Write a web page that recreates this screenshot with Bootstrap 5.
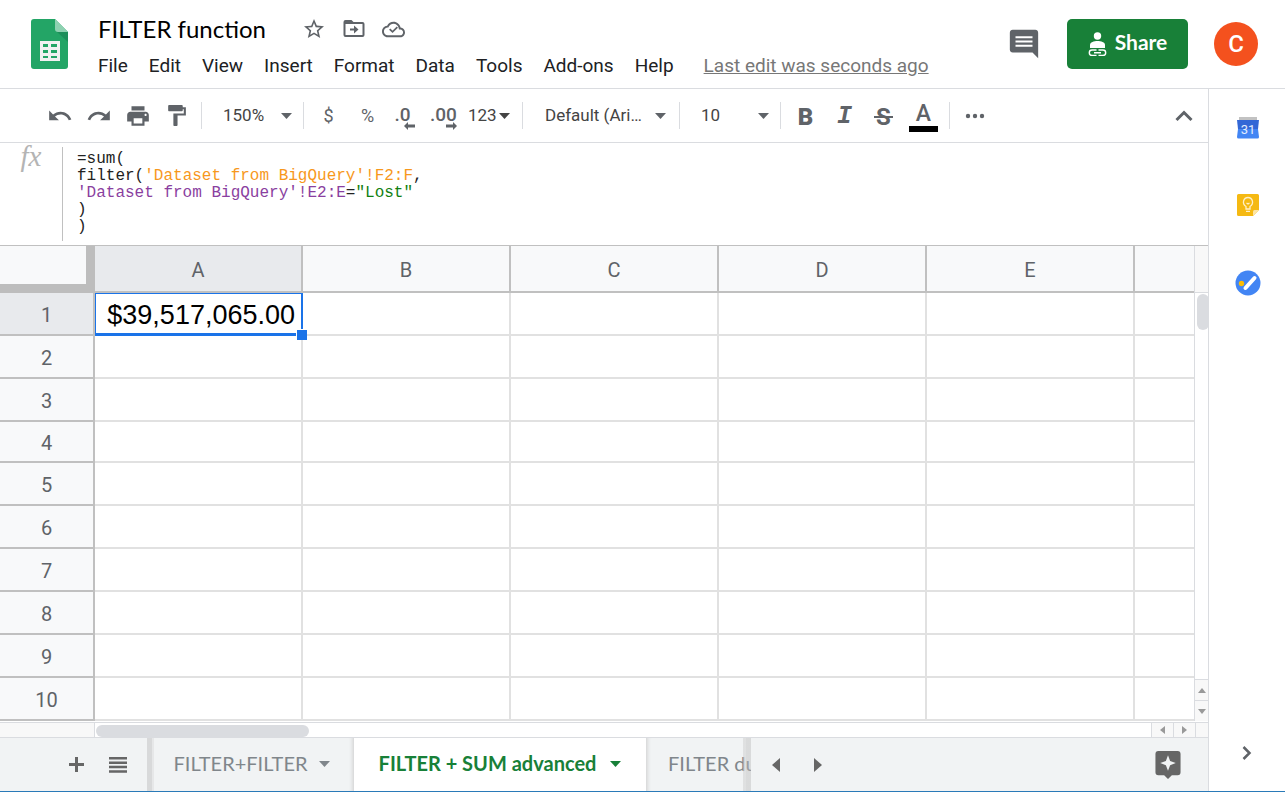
<!DOCTYPE html>
<html lang="en">
<head>
<meta charset="utf-8">
<meta name="viewport" content="width=device-width, initial-scale=1">
<title>FILTER function</title>
<link href="https://cdn.jsdelivr.net/npm/bootstrap@5.3.0/dist/css/bootstrap.min.css" rel="stylesheet">
<style>
  :root { --ink:#5f6368; --line:#dadce0; --head:#c0c0c0; --cell:#e1e1e1; --green:#188038; }
  body { font-family: Roboto, "Liberation Sans", sans-serif; color:#202124; background:#fff; }
  svg { display:block; fill:currentColor; flex:none; }
  button { color:inherit; }
  .plain { border:0; background:none; padding:0; display:flex; align-items:center; justify-content:center; flex:none; }
  .ink { color:var(--ink); }

  /* header */
  .topbar { height:89px; padding:0 27px 0 31px; border-bottom:1px solid var(--line); }
  .logo { margin-top:19px; }
  .doc { margin:13px 0 0 30px; }
  .doc-title { font:400 24px/32px Lato, sans-serif; color:#000; margin:0 36px 0 0; }
  .doc-icons { color:var(--ink); gap:17px; }
  .menus { gap:21px; font-size:19px; line-height:26px; padding-top:8px; }
  .menus a { color:#202124; text-decoration:none; white-space:nowrap; }
  .menus a.last-edit { color:#777; text-decoration:underline; margin-left:9px; }
  .actions { margin-top:19px; gap:26px; }
  .share { height:50px; width:121px; border-radius:5px; background:var(--green); color:#fff; font:700 21px/24px Lato, sans-serif; padding-bottom:4px; }
  .share svg { margin-top:5px; }
  .avatar { width:44px; height:44px; border-radius:50%; background:#f4511e; color:#fff; font-weight:500; font-size:24px; }

  /* toolbar */
  .toolbar { height:54px; padding:0 5px 0 40px; border-bottom:1px solid var(--line); color:var(--ink); font-size:18px; }
  .tool { width:39px; height:40px; }
  .rule { width:1px; height:27px; background:var(--line); margin:0 5px; flex:none; }
  .pick { appearance:none; border:0; color:#444; font-size:17px; height:40px; padding:0 16px; flex:none;
    background:no-repeat right 6px center / 11px 6px url("data:image/svg+xml,%3Csvg xmlns='http://www.w3.org/2000/svg' viewBox='0 0 11 6'%3E%3Cpath fill='%235f6368' d='M0 0h11L5.5 6z'/%3E%3C/svg%3E"); }
  .pick-zoom { width:91px; } .pick-font { width:146px; padding-left:17px; background-position:right 8px center; } .pick-size { width:90px; }
  .numfmt { width:52px; gap:2px; font-size:17px; color:#444; justify-content:start; padding-left:3px; }
  .decimals { position:relative; font-weight:500; font-size:19px; }
  .decimals svg { position:absolute; right:11px; bottom:6px; }
  .decimals.more svg { right:8px; }
  .bold-t { font-weight:900; font-size:24px; padding-top:3px; }
  .ital-t { font:italic 700 25px/24px "Liberation Mono", monospace; padding-top:3px; }
  .strike-t { font-weight:700; font-size:24px; position:relative; padding-top:2px; }
  .strike-t::after { content:""; position:absolute; left:10px; right:10px; top:20px; height:2px; background:currentColor; }
  .color-t { width:41px; flex-direction:column; font-weight:500; font-size:23px; line-height:24px; padding-top:2px; }
  .color-t i { width:29px; height:6px; background:#000; }

  /* formula bar */
  .formula { height:103px; border-bottom:1px solid var(--head); }
  .fx { width:62px; font:italic 29px/26px "Liberation Serif", serif; color:#b4b4b4; }
  .formula pre { margin:4px 0; padding:4px 14px; border-left:1px solid var(--head); font:16px/17px "Liberation Mono", monospace; color:#222; overflow:hidden; flex:1; }
  .ref-a { color:#f7981d; } .ref-b { color:#8a3fa0; } .str { color:#118011; }

  /* sheet */
  .sheet { table-layout:fixed; border-collapse:separate; border-spacing:0; width:100%; }
  .sheet .c-head { width:95px; } .sheet .c-data { width:208px; }
  .sheet th { background:#f8f9fa; color:var(--ink); font-weight:400; font-size:20px; text-align:center; padding:2px 0 0; border:solid var(--head); border-width:0 2px 2px 0; }
  .sheet td { padding:0 6px; border:solid var(--cell); border-width:0 2px 2px 0; text-align:right; }
  .sheet tr > :last-child { border-right:0; }
  .sheet thead tr { height:47px; }
  .sheet tbody tr { height:43px; }
  .sheet tbody tr.short { height:41px; }
  .sheet th.on { background:#e8eaed; }
  .sheet th.corner { border-width:0 9px 9px 0; border-color:#bdbdbd; }
  .sheet td.active { position:relative; font:27px/38px "Liberation Sans", sans-serif; color:#000; white-space:nowrap; padding-top:3px; }
  .active::before { content:""; position:absolute; inset:0 -2px -2px 0; border:solid #1a73e8; border-width:1px 2px 3px 1px; }
  .active::after { content:""; position:absolute; right:-6px; bottom:-6px; width:11px; height:11px; background:#1a73e8; border:solid #fff; border-width:1px 0 0 1px; z-index:1; }

  /* scroll lanes */
  .lane-y { width:14px; border-left:1px solid var(--line); flex:none; }
  .lane-y .cap { height:47px; background:#f8f8f8; border-bottom:1px solid var(--line); }
  .lane-y .thumb { width:12px; height:36px; border-radius:6px; background:#dadce0; margin:1px 0 0 2px; }
  .lane-y .step { height:21px; border-top:1px solid var(--line); background:#f8f8f8; width:100%; color:#999; }
  .lane-x { height:16px; border:solid var(--line); border-width:1px 0 1px 0; margin-top:1px; }
  .lane-x .cap { width:95px; background:#f8f8f8; border-right:1px solid var(--line); }
  .lane-x .thumb { width:213px; height:12px; border-radius:6px; background:#dadce0; margin:2px 0 0 1px; }
  .lane-x .step { border-left:1px solid var(--line); background:#f8f8f8; color:#999; width:22px; }
  .lane-x .end { width:13px; border-left:1px solid var(--line); background:#f8f8f8; }

  /* sheet tabs */
  .tabs { height:53px; background:#f1f3f4; color:#666; }
  .tab-tools { width:147px; padding-right:20px; gap:25px; }
  .tabs .edge { width:7px; background:linear-gradient(90deg,#d8d9da 0 5px,#e6e7e8 5px); flex:none; }
  .tab { font:400 20px/24px Lato, sans-serif; color:#80868b; gap:12px; white-space:nowrap; padding-bottom:4px; }
  .tab svg { margin-top:2px; }
  .tab-one { width:200px; padding-right:4px; box-shadow:inset -5px 0 4px -4px #ccc; }
  .tab-now { width:292px; gap:14px; background:#fff; color:var(--green); font-weight:700; }
  .tab-cut { width:105px; overflow:hidden; padding-left:22px; justify-content:start; position:relative; box-shadow:inset 5px 0 4px -4px #ccc; }
  .tab-cut::after { content:""; position:absolute; inset:0 0 0 auto; width:8px; background:linear-gradient(90deg,#cccc 0 3px,#bbbb 3px); opacity:.6; }
  .tab-steps { padding-left:21px; gap:34px; }
  .explore { margin-right:27px; }

  .side { width:77px; border-left:1px solid var(--line); padding:27px 0 31px; flex:none; }
  .side .apps { gap:52px; padding-left:1px; }
  .foot-rule { height:1px; background:#2a7ab8; }
</style>
</head>
<body class="d-flex flex-column min-vh-100">

<header class="topbar d-flex align-items-start">
  <svg class="logo" width="37" height="50" viewBox="0 0 37 50" aria-hidden="true">
    <path fill="#23a566" d="M3 0h21l13 13v34a3 3 0 0 1-3 3H3a3 3 0 0 1-3-3V3a3 3 0 0 1 3-3z"/>
    <path fill="#1c8f5a" d="M25 12l12 11V13z"/><path fill="#8ed1b1" d="M24 0l13 13H27a3 3 0 0 1-3-3z"/>
    <path fill="#f1f1f1" fill-rule="evenodd" d="M9 22h20v20H9zM12 25v3h5v-3zm8 0v3h6v-3zm-8 6v3h5v-3zm8 0v3h6v-3zm-8 6v2h5v-2zm8 0v2h6v-2z"/>
  </svg>
  <div class="doc flex-grow-1">
    <div class="d-flex align-items-center">
      <h1 class="doc-title">FILTER function</h1>
      <div class="doc-icons d-flex align-items-center">
        <button class="plain" aria-label="Star"><svg width="24" height="24" viewBox="0 0 24 24"><path d="M22 9.240l-7.190-.620L12 2 9.190 8.630 2 9.240l5.460 4.730L5.820 21 12 17.270 18.180 21l-1.630-7.030L22 9.240zM12 15.400l-3.760 2.270 1-4.280-3.320-2.880 4.380-.380L12 6.100l1.710 4.040 4.380.380-3.320 2.880 1 4.280L12 15.400z"/></svg></button>
        <button class="plain" aria-label="Move"><svg width="22" height="18" viewBox="0 0 22 18"><path fill-rule="evenodd" d="M2.500 0h6l2 2h9A2 2 0 0 1 21.500 4v11a2 2 0 0 1-2 2h-17a2 2 0 0 1-2-2V2a2 2 0 0 1 2-2zM2.500 4v11h17V4zM11 5.500l4.500 4-4.500 4v-3H7v-2h4z"/></svg></button>
        <button class="plain" aria-label="Saved to Drive"><svg width="23" height="23" viewBox="0 0 24 24"><path d="M19.350 10.040C18.670 6.590 15.640 4 12 4 9.110 4 6.610 5.640 5.360 8.040 2.350 8.360 0 10.910 0 14c0 3.310 2.690 6 6 6h13c2.760 0 5-2.240 5-5 0-2.640-2.050-4.780-4.650-4.960zM19 18H6c-2.210 0-4-1.790-4-4 0-2.050 1.530-3.760 3.560-3.970l1.070-.110.500-.950C8.080 7.140 9.940 6 12 6c2.620 0 4.880 1.860 5.390 4.430l.300 1.500 1.530.110c1.560.100 2.780 1.410 2.780 2.960 0 1.650-1.350 3-3 3z"/><path d="M8 11.500l3 3 5-5" fill="none" stroke="currentColor" stroke-width="1.800"/></svg></button>
      </div>
    </div>
    <nav class="menus d-flex" aria-label="Menus">
      <a href="#">File</a><a href="#">Edit</a><a href="#">View</a><a href="#">Insert</a><a href="#">Format</a><a href="#">Data</a><a href="#">Tools</a><a href="#">Add-ons</a><a href="#">Help</a>
      <a href="#" class="last-edit">Last edit was seconds ago</a>
    </nav>
  </div>
  <div class="actions d-flex align-items-center">
    <button class="plain ink" aria-label="Comments"><svg width="34" height="34" viewBox="0 0 24 24"><path d="M21.990 4c0-1.100-.890-2-1.990-2H4c-1.100 0-2 .900-2 2v12c0 1.100.900 2 2 2h14l4 4-.010-18zM18 14H6v-1.500h12V14zm0-3H6V9.500h12V11zm0-3H6V6.500h12V8z"/></svg></button>
    <button class="plain share gap-2">
      <svg width="19" height="25" viewBox="0 0 19 25"><circle cx="9.500" cy="4" r="3.700"/><path d="M2 16v-3c0-3 4-4 7.500-4s7.500 1 7.500 4v3z"/><path d="M8.500 18H4a2.700 2.700 0 0 0 0 5.400h4.500m2-5.400H15a2.700 2.700 0 0 1 0 5.400h-4.500M6 20.700h7" fill="none" stroke="#fff" stroke-width="1.400"/></svg>
      Share</button>
    <button class="plain avatar" aria-label="Account">C</button>
  </div>
</header>

<div class="d-flex flex-grow-1">
  <main class="flex-grow-1 d-flex flex-column overflow-hidden">
    <div class="toolbar d-flex align-items-center" role="toolbar" aria-label="Formatting">
      <button class="plain tool" aria-label="Undo"><svg width="26" height="26" viewBox="0 0 24 24"><path d="M12.500 8c-2.650 0-5.050.990-6.900 2.600L2 7v9h9l-3.620-3.620c1.390-1.160 3.160-1.880 5.120-1.880 3.540 0 6.550 2.310 7.600 5.500l2.370-.780C21.080 11.030 17.150 8 12.500 8z"/></svg></button>
      <button class="plain tool" aria-label="Redo"><svg width="26" height="26" viewBox="0 0 24 24"><path d="M18.400 10.600C16.550 8.990 14.150 8 11.500 8c-4.650 0-8.580 3.030-9.960 7.220L3.900 16c1.050-3.190 4.050-5.500 7.600-5.500 1.950 0 3.730.720 5.120 1.880L13 16h9V7l-3.600 3.600z"/></svg></button>
      <button class="plain tool" aria-label="Print"><svg width="26" height="26" viewBox="0 0 24 24"><path d="M19 8H5c-1.660 0-3 1.340-3 3v6h4v4h12v-4h4v-6c0-1.660-1.340-3-3-3zm-3 11H8v-5h8v5zm3-7c-.550 0-1-.450-1-1s.450-1 1-1 1 .450 1 1-.450 1-1 1zm-1-9H6v4h12V3z"/></svg></button>
      <button class="plain tool" aria-label="Paint format"><svg width="25" height="25" viewBox="0 0 24 24"><path d="M18 4V3c0-.550-.450-1-1-1H5c-.550 0-1 .450-1 1v4c0 .550.450 1 1 1h12c.550 0 1-.450 1-1V6h1v4H9v11c0 .550.450 1 1 1h2c.550 0 1-.450 1-1v-9h8V4h-3z"/></svg></button>
      <span class="rule"></span>
      <select class="pick pick-zoom" aria-label="Zoom"><option>150%</option></select>
      <span class="rule"></span>
      <button class="plain tool">$</button>
      <button class="plain tool">%</button>
      <button class="plain tool decimals pe-2">.0<svg width="11" height="8" viewBox="0 0 11 8"><path d="M4 0v2.500h7v3H4V8L0 4z"/></svg></button>
      <button class="plain tool decimals more pe-1">.00<svg width="11" height="8" viewBox="0 0 11 8"><path d="M7 0v2.500H0v3h7V8l4-4z"/></svg></button>
      <button class="plain numfmt">123<svg width="11" height="6" viewBox="0 0 11 6"><path d="M0 0h11L5.500 6z"/></svg></button>
      <span class="rule"></span>
      <select class="pick pick-font" aria-label="Font"><option>Default (Ari…</option></select>
      <span class="rule"></span>
      <select class="pick pick-size" aria-label="Font size"><option>10</option></select>
      <span class="rule"></span>
      <button class="plain tool bold-t">B</button>
      <button class="plain tool ital-t">I</button>
      <button class="plain tool strike-t">S</button>
      <button class="plain color-t">A<i></i></button>
      <span class="rule"></span>
      <button class="plain tool" aria-label="More"><svg width="20" height="6" viewBox="0 0 20 6"><circle cx="3" cy="3" r="2.200"/><circle cx="10" cy="3" r="2.200"/><circle cx="17" cy="3" r="2.200"/></svg></button>
      <button class="plain tool ms-auto" aria-label="Hide menus"><svg width="18" height="12" viewBox="0 0 18 12"><path d="M1.500 10L9 2.500l7.500 7.500" fill="none" stroke="currentColor" stroke-width="3"/></svg></button>
    </div>

    <div class="formula d-flex">
      <div class="fx text-center">fx</div>
      <pre contenteditable="true" spellcheck="false" role="textbox" aria-label="Formula">=sum(
filter(<span class="ref-a">'Dataset from BigQuery'!F2:F</span>,
<span class="ref-b">'Dataset from BigQuery'!E2:E</span>=<span class="str">"Lost"</span>
)
)</pre>
    </div>

    <div class="d-flex">
      <div class="flex-grow-1">
        <table class="sheet">
          <colgroup><col class="c-head"><col class="c-data"><col class="c-data"><col class="c-data"><col class="c-data"><col class="c-data"><col></colgroup>
          <thead><tr><th class="corner"></th><th class="on" scope="col">A</th><th scope="col">B</th><th scope="col">C</th><th scope="col">D</th><th scope="col">E</th><th></th></tr></thead>
          <tbody>
            <tr><th class="on" scope="row">1</th><td class="active">$39,517,065.00</td><td></td><td></td><td></td><td></td><td></td></tr>
            <tr><th scope="row">2</th><td></td><td></td><td></td><td></td><td></td><td></td></tr>
            <tr><th scope="row">3</th><td></td><td></td><td></td><td></td><td></td><td></td></tr>
            <tr class="short"><th scope="row">4</th><td></td><td></td><td></td><td></td><td></td><td></td></tr>
            <tr><th scope="row">5</th><td></td><td></td><td></td><td></td><td></td><td></td></tr>
            <tr><th scope="row">6</th><td></td><td></td><td></td><td></td><td></td><td></td></tr>
            <tr><th scope="row">7</th><td></td><td></td><td></td><td></td><td></td><td></td></tr>
            <tr><th scope="row">8</th><td></td><td></td><td></td><td></td><td></td><td></td></tr>
            <tr><th scope="row">9</th><td></td><td></td><td></td><td></td><td></td><td></td></tr>
            <tr><th scope="row">10</th><td></td><td></td><td></td><td></td><td></td><td></td></tr>
          </tbody>
        </table>
      </div>
      <div class="lane-y d-flex flex-column">
        <div class="cap"></div><div class="thumb"></div>
        <button class="plain step mt-auto" aria-label="Scroll up"><svg width="8" height="5" viewBox="0 0 8 5"><path d="M0 5h8L4 0z"/></svg></button>
        <button class="plain step" aria-label="Scroll down"><svg width="8" height="5" viewBox="0 0 8 5"><path d="M0 0h8L4 5z"/></svg></button>
      </div>
    </div>
    <div class="lane-x d-flex">
      <div class="cap"></div><div class="thumb"></div>
      <button class="plain step ms-auto" aria-label="Scroll left"><svg width="5" height="8" viewBox="0 0 5 8"><path d="M5 0v8L0 4z"/></svg></button>
      <button class="plain step" aria-label="Scroll right"><svg width="5" height="8" viewBox="0 0 5 8"><path d="M0 0v8l5-4z"/></svg></button>
      <div class="end"></div>
    </div>

    <div class="tabs d-flex flex-grow-1">
      <div class="tab-tools d-flex align-items-center justify-content-end">
        <button class="plain" aria-label="Add sheet"><svg width="15" height="15" viewBox="0 0 15 15"><path d="M6 0h3v6h6v3H9v6H6V9H0V6h6z"/></svg></button>
        <button class="plain" aria-label="All sheets"><svg width="18" height="16" viewBox="0 0 18 16"><path d="M0 0h18v2.500H0zM0 4.400h18v2.500H0zM0 8.800h18v2.500H0zM0 13.200h18v2.500H0z"/></svg></button>
      </div>
      <span class="edge"></span>
      <button class="plain tab tab-one">FILTER+FILTER<svg width="11" height="6" viewBox="0 0 11 6"><path d="M0 0h11L5.500 6z"/></svg></button>
      <button class="plain tab tab-now">FILTER + SUM advanced<svg width="11" height="6" viewBox="0 0 11 6"><path d="M0 0h11L5.500 6z"/></svg></button>
      <button class="plain tab tab-cut">FILTER du</button>
      <div class="tab-steps d-flex align-items-center">
        <button class="plain" aria-label="Previous sheets"><svg width="8" height="14" viewBox="0 0 8 14"><path d="M8 0v14L0 7z"/></svg></button>
        <button class="plain" aria-label="Next sheets"><svg width="8" height="14" viewBox="0 0 8 14"><path d="M0 0v14l8-7z"/></svg></button>
      </div>
      <button class="plain explore ms-auto" aria-label="Explore"><svg width="26" height="28" viewBox="0 0 26 29"><path fill-rule="evenodd" d="M3 0h20a3 3 0 0 1 3 3v19a3 3 0 0 1-3 3h-6l-4 4-4-4H3a3 3 0 0 1-3-3V3a3 3 0 0 1 3-3zM13 4.500l-2.200 5.800L5 12.500l5.800 2.200L13 20.500l2.200-5.800 5.800-2.200-5.800-2.200z"/></svg></button>
    </div>
  </main>

  <aside class="side d-flex flex-column align-items-center">
    <div class="apps d-flex flex-column align-items-center">
      <button class="plain" aria-label="Calendar"><svg width="22" height="24" viewBox="0 0 22 24"><path fill="#c2c2c2" d="M2 1h18v4H2z"/><path fill="#3367d6" d="M0 4h22l-1 9H1z"/><path fill="#4285f4" d="M1 13h20l1 8a1.500 1.500 0 0 1-1.500 1.500h-19A1.500 1.500 0 0 1 0 21z"/><text x="11" y="18" text-anchor="middle" font-size="13" fill="#e3ecfd">31</text></svg></button>
      <button class="plain" aria-label="Keep"><svg width="22" height="26" viewBox="0 0 22 26"><path fill="#f5b912" d="M1.500 2h19A1.500 1.500 0 0 1 22 3.500V18l-6 6H1.500A1.500 1.500 0 0 1 0 22.500v-19A1.500 1.500 0 0 1 1.500 2z"/><path fill="#fce5a6" d="M16 24v-4.500a1.500 1.500 0 0 1 1.500-1.500H22z"/><path fill="none" stroke="#fff0c8" stroke-width="1.300" d="M9 17v-2.500c-4.500-3-2.500-9 2-9s6.500 6 2 9V17zM9 19.300h4M9.500 11l1.500 1 1.500-1"/></svg></button>
      <button class="plain" aria-label="Tasks"><svg width="26" height="26" viewBox="0 0 26 26"><circle cx="13" cy="13" r="12.500" fill="#4285f4"/><path d="M10.500 18l9-10" stroke="#fff" stroke-width="4" stroke-linecap="round"/><circle cx="6.500" cy="13.500" r="2.700" fill="#fbbc04"/></svg></button>
    </div>
    <button class="plain ink mt-auto" aria-label="Hide side panel"><svg width="10" height="14" viewBox="0 0 10 14"><path d="M1.500 1L7.500 7l-6 6" fill="none" stroke="currentColor" stroke-width="2.500"/></svg></button>
  </aside>
</div>
<div class="foot-rule"></div>
<script src="https://cdn.jsdelivr.net/npm/bootstrap@5.3.0/dist/js/bootstrap.bundle.min.js"></script>
</body>
</html>
